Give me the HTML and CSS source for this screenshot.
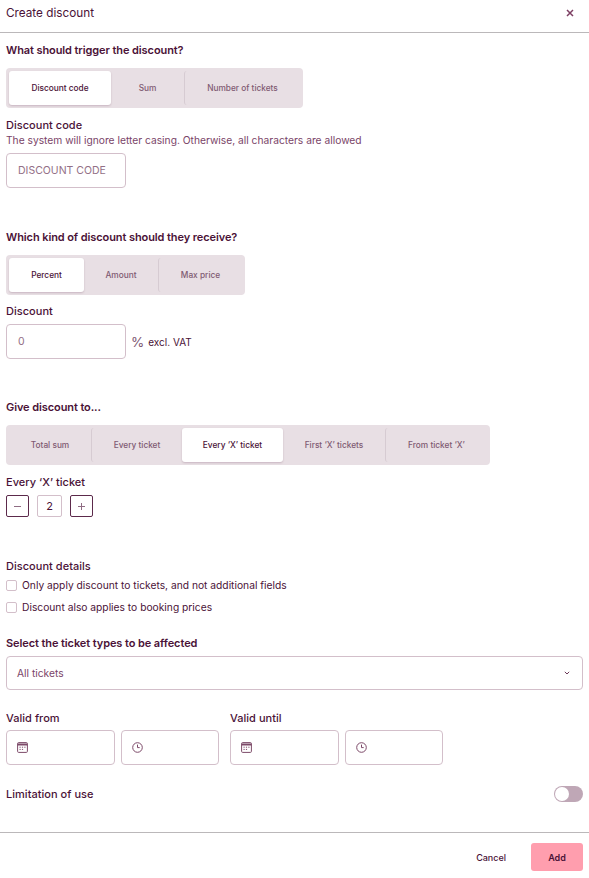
FILE: index.html
```html
<!DOCTYPE html>
<html lang="en">
<head>
  <meta charset="UTF-8">
  <title>Create discount</title>
  <link rel="stylesheet" href="styles.css">
</head>
<body>
  <div class="modal">
    <header class="modal-head">
      <span class="modal-title">Create discount</span>
      <button class="close" aria-label="Close">
        <svg width="8" height="8" viewBox="0 0 8 8"><path d="M1 1l6 6M7 1L1 7" stroke="#7d3f63" stroke-width="1.5" fill="none"/></svg>
      </button>
    </header>

    <div class="modal-body">
      <h3 class="heading first">What should trigger the discount?</h3>
      <div class="segment seg-trigger">
        <button class="tab active">Discount code</button>
        <button class="tab">Sum</button>
        <button class="tab sep">Number of tickets</button>
      </div>
      <label class="label">Discount code</label>
      <p class="help">The system will ignore letter casing. Otherwise, all characters are allowed</p>
      <input class="input short" type="text" placeholder="DISCOUNT CODE">

      <h3 class="heading second">Which kind of discount should they receive?</h3>
      <div class="segment seg-kind">
        <button class="tab active">Percent</button>
        <button class="tab">Amount</button>
        <button class="tab sep">Max price</button>
      </div>
      <label class="label">Discount</label>
      <div class="discount-row">
        <input class="input short" type="text" placeholder="0">
        <span class="percent">%</span>
        <span class="vat">excl. VAT</span>
      </div>

      <h3 class="heading third">Give discount to...</h3>
      <div class="segment seg-give">
        <button class="tab">Total sum</button>
        <button class="tab sep">Every ticket</button>
        <button class="tab active">Every ‘X’ ticket</button>
        <button class="tab">First ‘X’ tickets</button>
        <button class="tab sep">From ticket ‘X’</button>
      </div>
      <label class="label">Every ‘X’ ticket</label>
      <div class="stepper">
        <button class="step" aria-label="Less">
          <svg width="7" height="7" viewBox="0 0 7 7"><path d="M0 3.5h7" stroke="#8f6c83" fill="none"/></svg>
        </button>
        <span class="step-value">2</span>
        <button class="step" aria-label="More">
          <svg width="7" height="7" viewBox="0 0 7 7"><path d="M0 3.5h7M3.5 0v7" stroke="#8f6c83" fill="none"/></svg>
        </button>
      </div>

      <h3 class="label fourth">Discount details</h3>
      <label class="check"><span class="box"></span>Only apply discount to tickets, and not additional fields</label>
      <label class="check"><span class="box"></span>Discount also applies to booking prices</label>

      <h3 class="heading fifth">Select the ticket types to be affected</h3>
      <div class="select">
        <span>All tickets</span>
        <svg width="6" height="4" viewBox="0 0 6 4"><path d="M.8.8L3 3l2.2-2.2" stroke="#6b3a58" stroke-width="1" fill="none"/></svg>
      </div>

      <div class="valid-row">
        <div class="valid-col">
          <label class="label">Valid from</label>
          <div class="date-pair">
            <div class="field date">
              <svg class="icon" width="11" height="11" viewBox="0 0 11 11"><rect x=".6" y=".6" width="9.8" height="9.8" rx="1" stroke="#7d4a69" fill="none"/><path d="M.6 2.5h9.8" stroke="#7d4a69" stroke-width="2"/><path d="M2.5 5.2h1.2M4.9 5.2h1.2M7.3 5.2h1.2M2.5 7.4h1.2M4.9 7.4h1.2" stroke="#7d4a69"/></svg>
            </div>
            <div class="field time">
              <svg class="icon" width="11" height="11" viewBox="0 0 11 11"><circle cx="5.5" cy="5.5" r="4.8" stroke="#7d4a69" fill="none"/><path d="M5.5 2.6v3h2.2" stroke="#7d4a69" fill="none"/></svg>
            </div>
          </div>
        </div>
        <div class="valid-col">
          <label class="label">Valid until</label>
          <div class="date-pair">
            <div class="field date">
              <svg class="icon" width="11" height="11" viewBox="0 0 11 11"><rect x=".6" y=".6" width="9.8" height="9.8" rx="1" stroke="#7d4a69" fill="none"/><path d="M.6 2.5h9.8" stroke="#7d4a69" stroke-width="2"/><path d="M2.5 5.2h1.2M4.9 5.2h1.2M7.3 5.2h1.2M2.5 7.4h1.2M4.9 7.4h1.2" stroke="#7d4a69"/></svg>
            </div>
            <div class="field time">
              <svg class="icon" width="11" height="11" viewBox="0 0 11 11"><circle cx="5.5" cy="5.5" r="4.8" stroke="#7d4a69" fill="none"/><path d="M5.5 2.6v3h2.2" stroke="#7d4a69" fill="none"/></svg>
            </div>
          </div>
        </div>
      </div>

      <div class="limit-row">
        <span class="label">Limitation of use</span>
        <span class="toggle"><span class="knob"></span></span>
      </div>
    </div>

    <footer class="modal-foot">
      <button class="cancel">Cancel</button>
      <button class="add">Add</button>
    </footer>
  </div>
</body>
</html>
```

FILE: styles.css
```css
* {
  box-sizing: border-box;
}

body {
  margin: 0;
  background: #fff;
  color: #4a1237;
  font-family: Inter, "Liberation Sans", sans-serif;
  font-size: 11px;
}

button {
  font-family: inherit;
  border: none;
  background: none;
  padding: 0;
}

.modal {
  width: 589px;
  height: 878px;
}

.modal-head {
  height: 33px;
  padding: 0 15px 7px 6px;
  display: flex;
  justify-content: space-between;
  align-items: center;
  border-bottom: 1px solid #bbb8ba;
}

.modal-title {
  font-size: 11.75px;
  line-height: 24px;
}

.close {
  display: flex;
}

.modal-body {
  padding: 0 6px;
  height: 799px;
}

.heading {
  margin: 0;
  font-size: 11px;
  font-weight: 600;
  line-height: 14px;
  letter-spacing: -0.09px;
}

.first { padding-top: 10px; margin-bottom: 11px; }
.second { margin-top: 42px; margin-bottom: 11px; }
.third { margin-top: 41px; margin-bottom: 11px; }
.fourth { margin: 42px 0 1px; }
.fifth { margin-top: 18px; margin-bottom: 6px; }

.segment {
  display: grid;
  height: 40px;
  padding: 3px;
  background: #e8dfe4;
  border-radius: 4px;
  margin-bottom: 10px;
}

.seg-trigger { width: 297px; grid-template-columns: 102px 73px 116px; }
.seg-kind { width: 239px; grid-template-columns: 75px 74px 84px; margin-bottom: 9px; }
.seg-give { width: 484px; grid-template-columns: 82px 91px 101px 102px 102px; }

.tab {
  font-size: 8.3px;
  font-weight: 500;
  color: #7f5a72;
  border-radius: 3px;
}

.tab.active {
  background: #fff;
  color: #4a1237;
  box-shadow: 0 1px 2px rgba(74, 18, 55, 0.2);
}

.tab.sep {
  border-left: 1px solid #d6cbd2;
}

.label {
  display: block;
  font-size: 11px;
  font-weight: 500;
  line-height: 14px;
  letter-spacing: 0.03px;
}

.help {
  margin: 0 0 5px;
  font-size: 10.25px;
  line-height: 16px;
  color: #7a4468;
}

.input {
  height: 35px;
  padding: 0 11px;
  border: 1px solid #d3bfca;
  border-radius: 4px;
  font-family: inherit;
  font-size: 10.5px;
  background: #fff;
}

.input::placeholder {
  color: #936f86;
  opacity: 1;
}

.short {
  width: 120px;
  display: block;
}

.discount-row {
  display: flex;
  align-items: center;
  margin-top: 6px;
}

.percent {
  margin-left: 5px;
  font-size: 13.5px;
  color: #7d5670;
}

.vat {
  margin-left: 4px;
  font-size: 10px;
}

.stepper {
  display: flex;
  gap: 8px;
  margin-top: 6px;
}

.step {
  width: 23px;
  height: 22px;
  border: 1px solid #5c2a4b;
  border-radius: 2px;
  display: flex;
  align-items: center;
  justify-content: center;
}

.step-value {
  width: 25px;
  height: 22px;
  border: 1px solid #d3bfca;
  border-radius: 2px;
  display: flex;
  align-items: center;
  justify-content: center;
  font-size: 11px;
}

.check {
  display: flex;
  align-items: center;
  gap: 5px;
  height: 22px;
  font-size: 10.25px;
  line-height: 14px;
}

.box {
  width: 11px;
  height: 11px;
  border: 1px solid #d3bfca;
  border-radius: 2px;
}

.select {
  width: 577px;
  height: 34px;
  padding: 0 12px 0 10px;
  border: 1px solid #d3bfca;
  border-radius: 4px;
  display: flex;
  justify-content: space-between;
  align-items: center;
  font-size: 10.25px;
  color: #7a4468;
}

.valid-row {
  display: flex;
  gap: 11px;
  margin-top: 21px;
}

.date-pair {
  display: flex;
  gap: 6px;
  margin-top: 5px;
}

.field {
  height: 35px;
  padding-left: 10px;
  border: 1px solid #d3bfca;
  border-radius: 4px;
  display: flex;
  align-items: center;
}

.date { width: 109px; }
.time { width: 98px; }

.limit-row {
  display: flex;
  justify-content: space-between;
  align-items: center;
  margin-top: 21px;
}

.toggle {
  width: 29px;
  height: 16px;
  padding: 1px;
  border-radius: 8px;
  background: #bfa7b6;
  display: flex;
}

.knob {
  width: 14px;
  height: 14px;
  border-radius: 50%;
  background: #fff;
}

.modal-foot {
  height: 46px;
  padding: 10px 6px 0 0;
  border-top: 1px solid #bbb8ba;
  display: flex;
  justify-content: flex-end;
  align-items: flex-start;
}

.cancel {
  height: 28px;
  margin-right: 25px;
  font-size: 9px;
  font-weight: 500;
  color: #4a1237;
}

.add {
  width: 52px;
  height: 28px;
  border-radius: 3px;
  background: #ff9eae;
  font-size: 9px;
  font-weight: 600;
  color: #4a1237;
}
```
